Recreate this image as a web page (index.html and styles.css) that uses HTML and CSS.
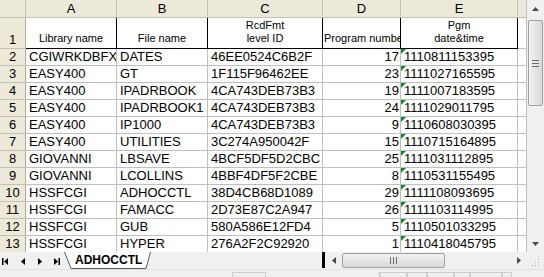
FILE: index.html
```html
<!DOCTYPE html>
<html>
<head>
<meta charset="utf-8">
<link rel="stylesheet" href="styles.css">
</head>
<body>
<div class="app">
  <div class="main">
    <div class="sheet">
      <div class="grid">
        <div class="corner"></div>
        <div class="ch">A</div>
        <div class="ch">B</div>
        <div class="ch">C</div>
        <div class="ch">D</div>
        <div class="ch">E</div>
        <div class="ch"></div>

        <div class="rh">1</div>
        <div class="c hd">Library name</div>
        <div class="c hd">File name</div>
        <div class="c hd">RcdFmt<br>level ID</div>
        <div class="c hd left">Program number</div>
        <div class="c hd">Pgm<br>date&amp;time</div>
        <div class="c"></div>

        <div class="rh">2</div><div class="c">CGIWRKDBFX</div><div class="c">DATES</div><div class="c">46EE0524C6B2F</div><div class="c num">17</div><div class="c txt">1110811153395</div><div class="c"></div>
        <div class="rh">3</div><div class="c">EASY400</div><div class="c">GT</div><div class="c">1F115F96462EE</div><div class="c num">23</div><div class="c txt">1111027165595</div><div class="c"></div>
        <div class="rh">4</div><div class="c">EASY400</div><div class="c">IPADRBOOK</div><div class="c">4CA743DEB73B3</div><div class="c num">19</div><div class="c txt">1111007183595</div><div class="c"></div>
        <div class="rh">5</div><div class="c">EASY400</div><div class="c">IPADRBOOK1</div><div class="c">4CA743DEB73B3</div><div class="c num">24</div><div class="c txt">1111029011795</div><div class="c"></div>
        <div class="rh">6</div><div class="c">EASY400</div><div class="c">IP1000</div><div class="c">4CA743DEB73B3</div><div class="c num">9</div><div class="c txt">1110608030395</div><div class="c"></div>
        <div class="rh">7</div><div class="c">EASY400</div><div class="c">UTILITIES</div><div class="c">3C274A950042F</div><div class="c num">15</div><div class="c txt">1110715164895</div><div class="c"></div>
        <div class="rh">8</div><div class="c">GIOVANNI</div><div class="c">LBSAVE</div><div class="c">4BCF5DF5D2CBC</div><div class="c num">25</div><div class="c txt">1111031112895</div><div class="c"></div>
        <div class="rh">9</div><div class="c">GIOVANNI</div><div class="c">LCOLLINS</div><div class="c">4BBF4DF5F2CBE</div><div class="c num">8</div><div class="c txt">1110531155495</div><div class="c"></div>
        <div class="rh">10</div><div class="c">HSSFCGI</div><div class="c">ADHOCCTL</div><div class="c">38D4CB68D1089</div><div class="c num">29</div><div class="c txt">1111108093695</div><div class="c"></div>
        <div class="rh">11</div><div class="c">HSSFCGI</div><div class="c">FAMACC</div><div class="c">2D73E87C2A947</div><div class="c num">26</div><div class="c txt">1111103114995</div><div class="c"></div>
        <div class="rh">12</div><div class="c">HSSFCGI</div><div class="c">GUB</div><div class="c">580A586E12FD4</div><div class="c num">5</div><div class="c txt">1110501033295</div><div class="c"></div>
        <div class="rh">13</div><div class="c">HSSFCGI</div><div class="c">HYPER</div><div class="c">276A2F2C92920</div><div class="c num">1</div><div class="c txt">1110418045795</div><div class="c"></div>
      </div>
    </div>
    <div class="vscroll">
      <div class="arrow">
        <svg width="7" height="4" viewBox="0 0 7 4"><polygon points="0,4 7,4 3.5,0" fill="#4a4a4a"/></svg>
      </div>
      <div class="vthumb">
        <svg width="7" height="7" viewBox="0 0 7 7"><path d="M0 0.5H7M0 3.5H7M0 6.5H7" stroke="#6a6a6a" stroke-width="1"/></svg>
      </div>
      <div class="vtrack"></div>
      <div class="arrow">
        <svg width="7" height="4" viewBox="0 0 7 4"><polygon points="0,0 7,0 3.5,4" fill="#4a4a4a"/></svg>
      </div>
    </div>
  </div>
  <div class="tabbar">
    <div class="navs">
      <svg class="n1" width="6" height="7" viewBox="0 0 6 7"><rect x="0" y="0" width="1.5" height="7" fill="#000"/><polygon points="6,0 6,7 2,3.5" fill="#000"/></svg>
      <svg class="n2" width="4" height="7" viewBox="0 0 4 7"><polygon points="4,0 4,7 0,3.5" fill="#000"/></svg>
      <svg class="n3" width="4" height="7" viewBox="0 0 4 7"><polygon points="0,0 0,7 4,3.5" fill="#000"/></svg>
      <svg class="n4" width="6" height="7" viewBox="0 0 6 7"><polygon points="0,0 0,7 4,3.5" fill="#000"/><rect x="4.5" y="0" width="1.5" height="7" fill="#000"/></svg>
    </div>
    <div class="tab">
      <svg class="slant" width="11" height="17" viewBox="0 0 11 17"><polygon points="0,0 11,0 11,17 7,17" fill="#fff"/><path d="M0.5 0L7 16.5" stroke="#5a5a5a" stroke-width="1" fill="none"/><path d="M7 16.5H11" stroke="#5a5a5a"/></svg>
      <span class="tabname">ADHOCCTL</span>
      <svg class="slant" width="9" height="17" viewBox="0 0 9 17"><polygon points="0,0 9,0 4,17 0,17" fill="#fff"/><path d="M8.5 0L4 16.5" stroke="#5a5a5a" stroke-width="1" fill="none"/><path d="M0 16.5H4" stroke="#5a5a5a"/></svg>
    </div>
    <div class="tabspace"></div>
    <div class="split"></div>
    <div class="hscroll">
      <div class="harrow">
        <svg width="4" height="7" viewBox="0 0 4 7"><polygon points="4,0 4,7 0,3.5" fill="#4a4a4a"/></svg>
      </div>
      <div class="hthumb">
        <svg width="7" height="7" viewBox="0 0 7 7"><path d="M0.5 0V7M3.5 0V7M6.5 0V7" stroke="#6a6a6a" stroke-width="1"/></svg>
      </div>
      <div class="htrack"></div>
      <div class="harrow">
        <svg width="4" height="7" viewBox="0 0 4 7"><polygon points="0,0 0,7 4,3.5" fill="#4a4a4a"/></svg>
      </div>
    </div>
    <div class="grip">
      <svg width="9" height="9" viewBox="0 0 9 9" fill="#a8a8a8"><rect x="7" y="1" width="1" height="1"/><rect x="4" y="4" width="1" height="1"/><rect x="7" y="4" width="1" height="1"/><rect x="1" y="7" width="1" height="1"/><rect x="4" y="7" width="1" height="1"/><rect x="7" y="7" width="1" height="1"/></svg>
    </div>
  </div>
  <div class="status">
    <div class="panel p1"></div>
    <div class="panel p2"></div>
    <div class="panel p3"></div>
    <div class="panel p4"></div>
    <div class="panel p5"></div>
    <div class="panel p6"></div>
    <div class="panel p7"></div>
    <div class="panel p8"></div>
  </div>
</div>
</body>
</html>
```

FILE: styles.css
```css
* { box-sizing: border-box; }
html, body { margin: 0; padding: 0; background: #ffffff; }
body { font-family: "Liberation Sans", Arial, sans-serif; }

.app { width: 544px; height: 277px; overflow: hidden; display: flex; flex-direction: column; background: #f0f0f0; }

.main { display: flex; height: 252px; flex: none; }
.sheet { width: 527px; height: 252px; overflow: hidden; background: #fff; }

.grid {
  display: grid;
  grid-template-columns: 26px 91px 91px 115px 78px 117px 9px;
  grid-template-rows: 18px 31px repeat(12, 17px);
}

.corner { background: #ece9d8; border-right: 1px solid #c5c2b2; border-bottom: 1px solid #c5c2b2; }
.ch {
  background: #ece9d8;
  border-right: 1px solid #c5c2b2;
  border-bottom: 1px solid #c5c2b2;
  font-size: 13px;
  line-height: 17px;
  text-align: center;
  color: #000;
}
.rh {
  background: #ece9d8;
  border-right: 1px solid #b0ad9e;
  border-bottom: 1px solid #c5c2b2;
  font-size: 13px;
  line-height: 15px;
  display: flex;
  align-items: flex-end;
  justify-content: center;
  padding-bottom: 1px;
  color: #000;
}

.c {
  background: #fff;
  border-right: 1px solid #c0c0c0;
  border-bottom: 1px solid #c0c0c0;
  font-size: 13px;
  line-height: 15px;
  padding: 0 2px 1px 3px;
  white-space: nowrap;
  overflow: hidden;
  display: flex;
  align-items: flex-end;
  color: #000;
  position: relative;
}
.c.hd {
  border-right: 1px solid #000;
  border-bottom: 1px solid #000;
  font-size: 11px;
  line-height: 13px;
  padding: 0 1px 3px 1px;
  justify-content: center;
  text-align: center;
  white-space: normal;
}
.c.hd.left { white-space: nowrap; justify-content: flex-start; padding-left: 1px; padding-right: 0; }
.c.num { justify-content: flex-end; padding-right: 1px; }
.c.txt::before {
  content: "";
  position: absolute;
  left: 0;
  top: 0;
  border-top: 5px solid #0a8a2a;
  border-right: 5px solid transparent;
}

/* vertical scrollbar */
.vscroll { width: 17px; height: 252px; background: #f0f0f0; display: flex; flex-direction: column; align-items: center; }
.arrow { height: 17px; width: 17px; display: flex; align-items: center; justify-content: center; flex: none; }
.vthumb {
  margin-top: 3px;
  width: 15px;
  height: 86px;
  border: 1px solid #a0a0a0;
  border-radius: 2px;
  background: linear-gradient(to right, #f2f2f2, #e6e6e6 50%, #d8d8d8);
  display: flex; align-items: center; justify-content: center;
  flex: none;
}
.vtrack { flex: 1; }

/* tab bar */
.tabbar { height: 17px; display: flex; align-items: stretch; background: #f0f0f0; flex: none; }
.navs { width: 64px; flex: none; display: flex; align-items: center; padding-left: 2px; padding-top: 1px; }
.navs svg { flex: none; display: block; }
.navs .n2 { margin-left: 13px; }
.navs .n3 { margin-left: 13px; }
.navs .n4 { margin-left: 12px; }
.tab { display: flex; align-items: flex-start; height: 17px; flex: none; }
.slant { display: block; flex: none; }
.tabname {
  background: #fff;
  height: 17px;
  font-weight: bold;
  font-size: 12px;
  line-height: 15px;
  padding-top: 1px;
  border-bottom: 1px solid #5a5a5a;
  color: #000;
}
.tabspace { flex: 1; }
.split { width: 3px; background: #000; margin: 0 0 1px 0; flex: none; }
.hscroll { width: 202px; display: flex; align-items: center; flex: none; }
.harrow { width: 17px; height: 17px; display: flex; align-items: center; justify-content: center; flex: none; }
.hthumb {
  width: 103px;
  height: 15px;
  border: 1px solid #a0a0a0;
  border-radius: 2px;
  background: linear-gradient(to bottom, #f2f2f2, #e6e6e6 50%, #d8d8d8);
  display: flex; align-items: center; justify-content: center;
  flex: none;
}
.htrack { flex: 1; }
.grip { width: 17px; flex: none; display: flex; align-items: flex-end; justify-content: center; padding-bottom: 2px; }

/* status */
.status { flex: 1; display: flex; background: #f0f0f0; border-top: 1px solid #e2e2e2; padding-top: 2px; }
.panel { border: 1px solid #cfcfcf; border-bottom: none; height: 10px; flex: none; }
.p1 { margin-left: 232px; width: 34px; }
.p2 { margin-left: 112px; width: 2px; border-left: none; }
.p3 { width: 27px; }
.p4 { width: 20px; }
.p5 { width: 27px; }
.p6 { width: 16px; }
.p7 { width: 32px; }
.p8 { width: 10px; }
```
